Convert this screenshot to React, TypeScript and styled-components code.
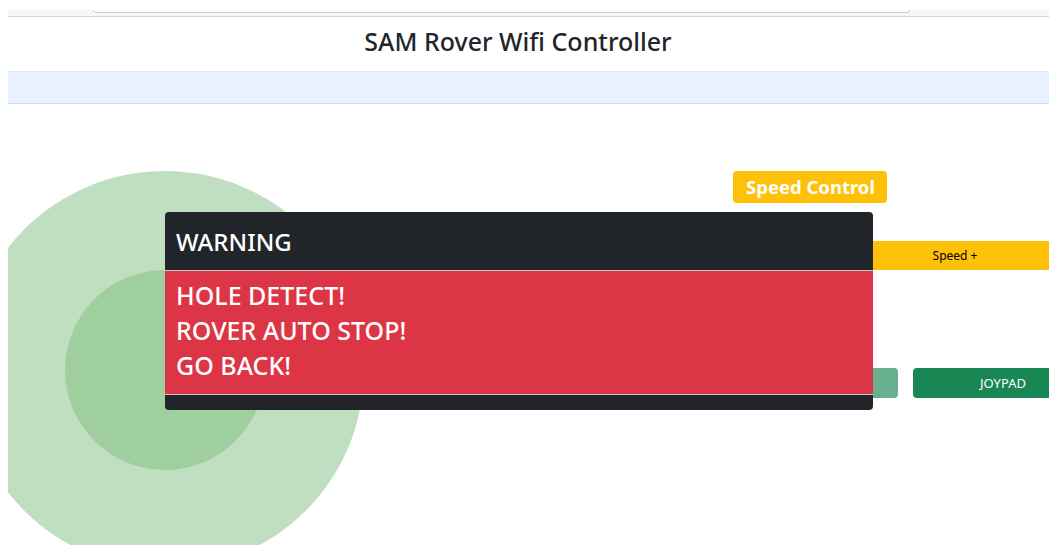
import React from 'react';
import styled, { createGlobalStyle } from 'styled-components';

const GlobalStyle = createGlobalStyle`
    html, body {
        margin: 0;
        padding: 0;
        background: #ffffff;
        overflow: hidden;
    }
    body {
        font-family: "Noto Sans", "Open Sans", sans-serif;
        color: #212529;
    }
`;

const Page = styled.div`
    position: relative;
    width: 1049px;
    height: 545px;
    padding-left: 8px;
    box-sizing: border-box;
    overflow: hidden;
`;

const TopStrip = styled.div`
    margin-top: 10px;
    height: 6px;
    background: #f7f7f7;
    border-bottom: 1px solid #d2d2d2;
`;

const SearchEdge = styled.div`
    width: 815px;
    height: 2px;
    margin-left: 85px;
    background: #ffffff;
    border: 1px solid #cdcdcd;
    border-top: none;
    border-radius: 0 0 4px 4px;
`;

const Title = styled.h1`
    margin: 0;
    padding: 10px 21px 15px 0;
    text-align: center;
    font-size: 25px;
    line-height: 29px;
    font-weight: 500;
    color: #212529;
`;

const InfoBand = styled.div`
    height: 31px;
    background: #e7f1ff;
    border-top: 1px solid #e2e6ec;
    border-bottom: 1px solid #d3dcea;
`;

const Main = styled.div`
    display: flex;
    height: 441px;
`;

const JoystickPane = styled.div`
    width: 420px;
    flex-shrink: 0;
    overflow: hidden;
    padding-top: 67px;
    box-sizing: border-box;
`;

const OuterRing = styled.div`
    width: 398px;
    height: 398px;
    margin-left: -42px;
    border-radius: 50%;
    background: #c0dfc1;
    display: flex;
    align-items: center;
    justify-content: center;
`;

const Knob = styled.div`
    width: 200px;
    height: 200px;
    border-radius: 50%;
    background: #9fcf9f;
`;

const ControlsPane = styled.div`
    margin-left: 290px;
    padding-top: 67px;
    display: flex;
    flex-direction: column;
    flex-shrink: 0;
    width: 375px;
`;

const Badge = styled.span`
    align-self: flex-start;
    margin-left: 15px;
    padding: 0 12px 0 13px;
    height: 32px;
    line-height: 32px;
    border-radius: 4px;
    background: #ffc107;
    color: #ffffff;
    font-size: 18.5px;
    font-weight: 700;
`;

const ButtonRow = styled.div<{ $top: number; $cols: string }>`
    display: grid;
    grid-template-columns: ${(p) => p.$cols};
    column-gap: 15px;
    margin-top: ${(p) => p.$top}px;
`;

const Button = styled.button<{ $tone: 'warning' | 'success'; $dim?: boolean }>`
    height: ${(p) => (p.$tone === 'warning' ? 29 : 30)}px;
    border: none;
    border-radius: ${(p) => (p.$tone === 'warning' ? 0 : 4)}px;
    background: ${(p) => (p.$tone === 'warning' ? '#ffc107' : '#198754')};
    color: ${(p) => (p.$tone === 'warning' ? '#000000' : '#ffffff')};
    opacity: ${(p) => (p.$dim ? 0.65 : 1)};
    font-family: "Noto Sans", sans-serif;
    font-size: ${(p) => (p.$tone === 'warning' ? 12 : 13)}px;
    padding: 0;
`;

const Modal = styled.div`
    position: absolute;
    left: 165px;
    top: 212px;
    width: 708px;
    border-radius: 4px;
    overflow: hidden;
    background: #212529;
    color: #ffffff;
`;

const ModalHeader = styled.div`
    height: 58px;
    padding: 0 11px;
    display: flex;
    align-items: center;
    font-size: 24px;
    font-weight: 500;
    border-bottom: 1px solid #c9c9c9;
`;

const ModalBody = styled.div`
    background: #dc3545;
    padding: 7px 11px 11px;
    font-size: 25px;
    font-weight: 500;
    line-height: 35px;
    border-bottom: 1px solid #c9c9c9;
`;

const ModalFooter = styled.div`
    height: 15px;
`;

const App = () => {
    const alerts = ['HOLE DETECT!', 'ROVER AUTO STOP!', 'GO BACK!'];

    return (
        <Page>
            <GlobalStyle />
            <TopStrip>
                <SearchEdge />
            </TopStrip>
            <Title>SAM Rover Wifi Controller</Title>
            <InfoBand />
            <Main>
                <JoystickPane>
                    <OuterRing>
                        <Knob />
                    </OuterRing>
                </JoystickPane>
                <ControlsPane>
                    <Badge>Speed Control</Badge>
                    <ButtonRow $top={38} $cols="128px 188px">
                        <Button $tone="warning">Speed -</Button>
                        <Button $tone="warning">Speed +</Button>
                    </ButtonRow>
                    <ButtonRow $top={98} $cols="180px 180px">
                        <Button $tone="success" $dim>BUTTON</Button>
                        <Button $tone="success">JOYPAD</Button>
                    </ButtonRow>
                </ControlsPane>
            </Main>
            <Modal>
                <ModalHeader>WARNING</ModalHeader>
                <ModalBody>
                    {alerts.map((line) => (
                        <div key={line}>{line}</div>
                    ))}
                </ModalBody>
                <ModalFooter />
            </Modal>
        </Page>
    );
};

export default App;
